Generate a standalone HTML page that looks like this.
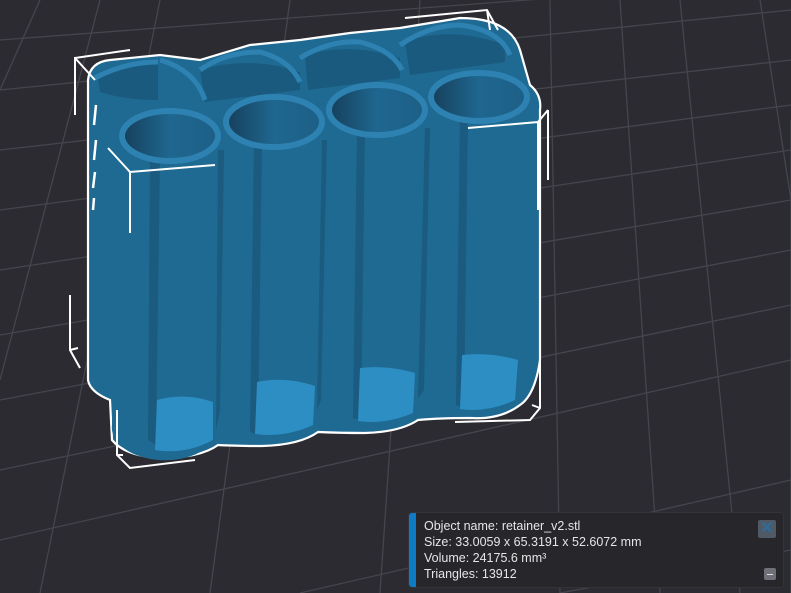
<!DOCTYPE html>
<html><head><style>
html,body{margin:0;padding:0;width:791px;height:593px;overflow:hidden;background:#2c2b31;font-family:"Liberation Sans",sans-serif}
svg{position:absolute;left:0;top:0}
.panel{position:absolute;left:408px;top:512px;width:374px;height:74px;background:#26262b;border-radius:3px;border:1px solid #333338}
.bar{position:absolute;left:0;top:0;width:7px;height:74px;background:#0e7bc7;border-radius:3px 0 0 3px}
.txt{position:absolute;left:15px;top:5px;color:#e6e6e6;font-size:12.5px;line-height:16px}
.x{position:absolute;right:7px;top:7px;width:18px;height:18px;background:#4f5a66;border-radius:2px;color:#2c6da0;font-size:16px;line-height:18px;text-align:center;font-weight:bold}
.m{position:absolute;right:7px;bottom:7px;width:12px;height:12px;background:#707078;border-radius:2px}
.m:after{content:"";position:absolute;left:3px;top:5.5px;width:6px;height:1.3px;background:#ddd}
</style></head><body>
<svg width="791" height="593" viewBox="0 0 791 593">
<defs>
<linearGradient id="in" x1="0" x2="1"><stop offset="0" stop-color="#163f5a"/><stop offset="0.5" stop-color="#1f6790"/><stop offset="1" stop-color="#1d5f86"/></linearGradient>
</defs>
<g stroke="#45454d" stroke-width="1.3" fill="none">
<path d="M0 40 L791 -20 M0 150 L791 60 M0 270 L791 150 M0 400 L791 250 M0 540 L791 360 M300 593 L791 480 M560 593 L791 550"/>
<path d="M40 0 L0 90 M160 0 L40 593 M290 0 L210 593 M420 0 L380 593 M550 0 L560 593 M680 0 L740 593 M791 120 L791 593"/>
<path d="M0 90 L791 10 M0 210 L791 105 M0 335 L791 200 M0 470 L791 305"/>
<path d="M100 0 L0 380 M620 0 L660 593 M760 0 L791 200"/>
</g>
<!-- silhouette -->
<path d="M88 80 Q90 62 110 60 L160 55 L200 60 L250 45 L300 40 L350 33 L400 28 L460 18 Q510 18 520 50 L530 85 Q542 95 540 110 L540 360 Q535 395 520 405 Q500 420 470 418 Q440 418 418 420 Q400 432 365 433 Q340 433 318 432 Q300 445 262 446 Q235 446 218 445 Q200 458 160 458 Q125 456 112 440 L110 400 Q90 392 88 380 Z" fill="#1f6a92" stroke="#fff" stroke-width="2.2"/>
<!-- back inner areas -->
<g fill="#1a5a7e">
<path d="M98 78 Q130 62 158 62 L158 100 Q125 100 100 92 Z"/>
<path d="M200 70 Q250 55 300 72 L300 90 L205 102 Z"/>
<path d="M305 55 Q350 42 400 58 L400 78 L308 90 Z"/>
<path d="M405 42 Q450 25 505 45 L505 62 L410 75 Z"/>
</g>
<g fill="none" stroke="#2e82b2" stroke-width="5">
<path d="M95 78 Q125 62 158 62"/>
<path d="M160 60 Q195 70 205 100"/>
<path d="M200 70 Q225 52 260 52 Q290 60 300 82"/>
<path d="M300 58 Q330 40 360 42 Q392 50 402 70"/>
<path d="M400 45 Q430 25 460 25 Q500 30 510 55"/>
</g>
<!-- front cylinders -->
<g fill="#1f6a92">
<path d="M118 136 L112 425 A52 32 0 0 0 218 430 L220 136 Z"/>
<path d="M224 122 L218 412 A50 30 0 0 0 318 412 L324 122 Z"/>
<path d="M327 110 L318 400 A50 30 0 0 0 418 400 L427 110 Z"/>
<path d="M429 97 L418 388 A50 30 0 0 0 520 382 L529 97 Z"/>
</g>
<g fill="#1a5b7f">
<path d="M150 155 L160 155 L156 445 L148 440 Z"/><path d="M254 140 L262 140 L258 435 L250 432 Z"/><path d="M357 128 L365 128 L361 420 L353 418 Z"/><path d="M460 115 L468 115 L464 408 L456 405 Z"/>
<path d="M218 150 L224 150 L220 410 L216 430 Z"/><path d="M322 140 L327 140 L321 400 L317 410 Z"/><path d="M425 128 L430 128 L424 390 L418 398 Z"/>
</g>
<g fill="#2d8ec4">
<path d="M157 400 Q185 392 213 402 L213 440 Q185 455 155 450 Z"/>
<path d="M257 382 Q285 376 315 386 L313 425 Q285 438 255 434 Z"/>
<path d="M360 368 Q388 365 415 373 L413 413 Q385 425 358 421 Z"/>
<path d="M462 355 Q490 352 518 360 L515 400 Q488 413 460 409 Z"/>
</g>
<g fill="url(#in)" stroke="#2e82b2" stroke-width="6">
<ellipse cx="170" cy="136" rx="48" ry="25"/>
<ellipse cx="274" cy="122" rx="48" ry="25"/>
<ellipse cx="377" cy="110" rx="48" ry="25"/>
<ellipse cx="479" cy="97" rx="48" ry="24"/>
</g>
<g fill="none" stroke="#fff" stroke-width="2">
<path d="M130 50 L75 58 L75 115 M75 58 L95 80"/>
<path d="M405 18 L487 10 L498 30 M487 10 L490 30"/>
<path d="M468 128 L538 122 L548 110 M548 110 L548 180 M538 122 L538 210"/>
<path d="M70 295 L70 350 L80 368 M70 350 L78 348"/>
<path d="M117 410 L117 455 L130 468 L195 460 M117 455 L123 455"/>
<path d="M540 355 L540 408 L530 420 L455 422 M540 408 L532 405"/>
<path d="M108 148 L130 172 L215 165 M130 172 L130 233"/>
</g>
<g stroke="#fff" stroke-width="2.5"><path d="M96 105 L94 125 M96 140 L94 160 M95 172 L93 188 M94 198 L93 210"/></g>
</svg>
<div class="panel"><div class="bar"></div>
<div class="txt">Object name: retainer_v2.stl<br>Size: 33.0059 x 65.3191 x 52.6072 mm<br>Volume: 24175.6 mm³<br>Triangles: 13912</div>
<div class="x">✕</div><div class="m"></div></div>
</body></html>
